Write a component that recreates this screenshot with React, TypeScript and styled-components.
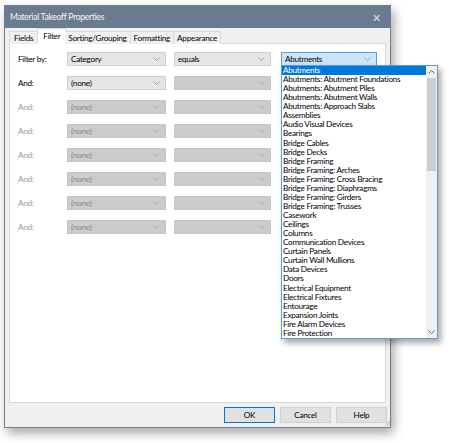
import React from 'react';
import styled, { createGlobalStyle } from 'styled-components';

const GlobalStyle = createGlobalStyle`
  body {
    margin: 0;
    background: #ffffff;
    font-family: Lato, 'Liberation Sans', sans-serif;
    letter-spacing: -0.28px;
  }
`;

const Page = styled.div`
  padding: 5px 0 0 4px;
  width: 450px;
  height: 443px;
  box-sizing: border-box;
`;

const Dialog = styled.div`
  width: 387px;
  height: 423px;
  box-sizing: border-box;
  border: 1px solid #6f7f93;
  background: #f0f0f0;
  box-shadow: 3px 5px 10px rgba(0, 0, 0, 0.35);
  display: flex;
  flex-direction: column;
`;

const TitleBar = styled.div`
  height: 22px;
  flex: none;
  background: #6b7b8f;
  color: #f4f6f8;
  font-size: 8.6px;
  display: flex;
  align-items: center;
  justify-content: space-between;
  padding: 0 9px 0 5px;
`;

const CloseGlyph = styled.span`
  font-size: 11px;
  color: #d8dde4;
  line-height: 1;
`;

const Body = styled.div`
  flex: 1;
  display: flex;
  flex-direction: column;
  padding: 0 4px 4px 4px;
  min-height: 0;
`;

const TabStrip = styled.div`
  height: 16px;
  display: flex;
  align-items: flex-end;
  flex: none;
  position: relative;
  z-index: 1;
`;

const Tab = styled.div<{ active?: boolean }>`
  height: ${p => (p.active ? 16 : 13)}px;
  box-sizing: border-box;
  padding: 0 ${p => (p.active ? 5 : 3)}px;
  margin: 0 ${p => (p.active ? -1 : 0)}px;
  font-size: 8.2px;
  color: #000000;
  display: flex;
  align-items: ${p => (p.active ? 'flex-start' : 'center')};
  padding-top: ${p => (p.active ? 2 : 0)}px;
  background: ${p => (p.active ? '#ffffff' : '#f0f0f0')};
  border: 1px solid #d9d9d9;
  border-bottom: ${p => (p.active ? '1px solid #ffffff' : 'none')};
  border-left: ${p => (p.active ? '1px solid #d9d9d9' : 'none')};
  &:first-child {
    border-left: 1px solid #d9d9d9;
    padding: 0 4px;
  }
`;

const Panel = styled.div`
  flex: 1;
  background: #ffffff;
  border: 1px solid #d9d9d9;
  margin-top: -1px;
  padding: 8px 0 0 7px;
`;

const FilterGrid = styled.div`
  display: grid;
  grid-template-columns: 42px 99px 97px 98px;
  column-gap: 8px;
  row-gap: 10px;
  grid-auto-rows: 14px;
  align-items: center;
`;

const Label = styled.div<{ disabled?: boolean }>`
  font-size: 8.2px;
  padding-left: 1px;
  color: ${p => (p.disabled ? '#9a9a9a' : '#000000')};
`;

const Combo = styled.div<{ variant?: 'normal' | 'disabled' | 'focus' }>`
  position: relative;
  height: 14px;
  box-sizing: border-box;
  display: flex;
  align-items: center;
  justify-content: space-between;
  padding: 0 5px 0 3px;
  font-size: 8.2px;
  color: ${p => (p.variant === 'disabled' ? '#8a8a8a' : '#000000')};
  background: ${p =>
    p.variant === 'disabled' ? '#cccccc' : p.variant === 'focus' ? '#cce4f7' : '#e5e5e5'};
  border: 1px solid
    ${p => (p.variant === 'disabled' ? '#c4c4c4' : p.variant === 'focus' ? '#5a9fd8' : '#d0d0d0')};
  &:nth-child(4n) {
    margin-left: 2px;
  }
`;

const Chevron = ({ up, color = '#9a9a9a' }: { up?: boolean; color?: string }) => (
  <svg width="7" height="4" viewBox="0 0 7 4" style={{ flex: 'none' }}>
    <path
      d={up ? 'M0.5 3.5 L3.5 0.5 L6.5 3.5' : 'M0.5 0.5 L3.5 3.5 L6.5 0.5'}
      fill="none"
      stroke={color}
      strokeWidth="0.9"
    />
  </svg>
);

const DropList = styled.div`
  position: absolute;
  top: 100%;
  left: -1px;
  width: 157px;
  height: 274px;
  box-sizing: border-box;
  border: 1px solid #5a9fd8;
  background: #ffffff;
  box-shadow: 3px 4px 6px rgba(0, 0, 0, 0.35);
  display: flex;
  z-index: 5;
`;

const Items = styled.div`
  flex: 1;
  overflow: hidden;
`;

const Item = styled.div<{ selected?: boolean }>`
  height: 9.07px;
  line-height: 9.07px;
  font-size: 8.2px;
  padding-left: 1px;
  white-space: nowrap;
  color: ${p => (p.selected ? '#ffffff' : '#000000')};
  background: ${p => (p.selected ? '#0078d7' : 'transparent')};
`;

const ScrollBar = styled.div`
  width: 11px;
  flex: none;
  background: #f0f0f0;
  display: flex;
  flex-direction: column;
`;

const ScrollArrow = styled.div`
  height: 12px;
  flex: none;
  display: flex;
  align-items: center;
  justify-content: center;
  background: #f0f0f0;
`;

const ScrollThumb = styled.div`
  height: 93px;
  flex: none;
  background: #cdcdcd;
  margin: 0 1px;
`;

const ScrollTrack = styled.div`
  flex: 1;
`;

const ButtonRow = styled.div`
  display: flex;
  justify-content: flex-end;
  gap: 5px;
  padding-top: 4px;
  margin-right: -1px;
  position: relative;
`;

const Button = styled.div<{ primary?: boolean }>`
  width: 51px;
  height: 16px;
  box-sizing: border-box;
  background: #e1e1e1;
  border: 1px solid ${p => (p.primary ? '#0078d7' : '#d0d0d0')};
  font-size: 8.2px;
  color: #000000;
  display: flex;
  align-items: center;
  justify-content: center;
`;

const Grip = styled.div`
  position: absolute;
  right: -3px;
  bottom: -3px;
  width: 6px;
  height: 6px;
  background-image: radial-gradient(circle, #b5b5b5 0.6px, transparent 0.8px);
  background-size: 2px 2px;
  clip-path: polygon(100% 0, 100% 100%, 0 100%);
`;

const categories = [
  'Abutments',
  'Abutments: Abutment Foundations',
  'Abutments: Abutment Piles',
  'Abutments: Abutment Walls',
  'Abutments: Approach Slabs',
  'Assemblies',
  'Audio Visual Devices',
  'Bearings',
  'Bridge Cables',
  'Bridge Decks',
  'Bridge Framing',
  'Bridge Framing: Arches',
  'Bridge Framing: Cross Bracing',
  'Bridge Framing: Diaphragms',
  'Bridge Framing: Girders',
  'Bridge Framing: Trusses',
  'Casework',
  'Ceilings',
  'Columns',
  'Communication Devices',
  'Curtain Panels',
  'Curtain Wall Mullions',
  'Data Devices',
  'Doors',
  'Electrical Equipment',
  'Electrical Fixtures',
  'Entourage',
  'Expansion Joints',
  'Fire Alarm Devices',
  'Fire Protection',
];

const tabs = ['Fields', 'Filter', 'Sorting/Grouping', 'Formatting', 'Appearance'];

const App: React.FC = () => {
  const disabledRows = [0, 1, 2, 3, 4, 5];

  return (
    <Page>
      <GlobalStyle />
      <Dialog>
        <TitleBar>
          <span>Material Takeoff Properties</span>
          <CloseGlyph>✕</CloseGlyph>
        </TitleBar>
        <Body>
          <TabStrip>
            {tabs.map(t => (
              <Tab key={t} active={t === 'Filter'}>
                {t}
              </Tab>
            ))}
          </TabStrip>
          <Panel>
            <FilterGrid>
              <Label>Filter by:</Label>
              <Combo>
                Category
                <Chevron />
              </Combo>
              <Combo>
                equals
                <Chevron />
              </Combo>
              <Combo variant="focus">
                Abutments
                <Chevron />
                <DropList>
                  <Items>
                    {categories.map((c, i) => (
                      <Item key={c} selected={i === 0}>
                        {c}
                      </Item>
                    ))}
                  </Items>
                  <ScrollBar>
                    <ScrollArrow>
                      <Chevron up color="#505050" />
                    </ScrollArrow>
                    <ScrollThumb />
                    <ScrollTrack />
                    <ScrollArrow>
                      <Chevron color="#505050" />
                    </ScrollArrow>
                  </ScrollBar>
                </DropList>
              </Combo>

              <Label>And:</Label>
              <Combo>
                (none)
                <Chevron />
              </Combo>
              <Combo variant="disabled">
                <span />
                <Chevron color="#b0b0b0" />
              </Combo>
              <span />

              {disabledRows.map(r => (
                <React.Fragment key={r}>
                  <Label disabled>And:</Label>
                  <Combo variant="disabled">
                    (none)
                    <Chevron color="#b0b0b0" />
                  </Combo>
                  <Combo variant="disabled">
                    <span />
                    <Chevron color="#b0b0b0" />
                  </Combo>
                  <span />
                </React.Fragment>
              ))}
            </FilterGrid>
          </Panel>
          <ButtonRow>
            <Button primary>OK</Button>
            <Button>Cancel</Button>
            <Button>Help</Button>
            <Grip />
          </ButtonRow>
        </Body>
      </Dialog>
    </Page>
  );
};

export default App;
